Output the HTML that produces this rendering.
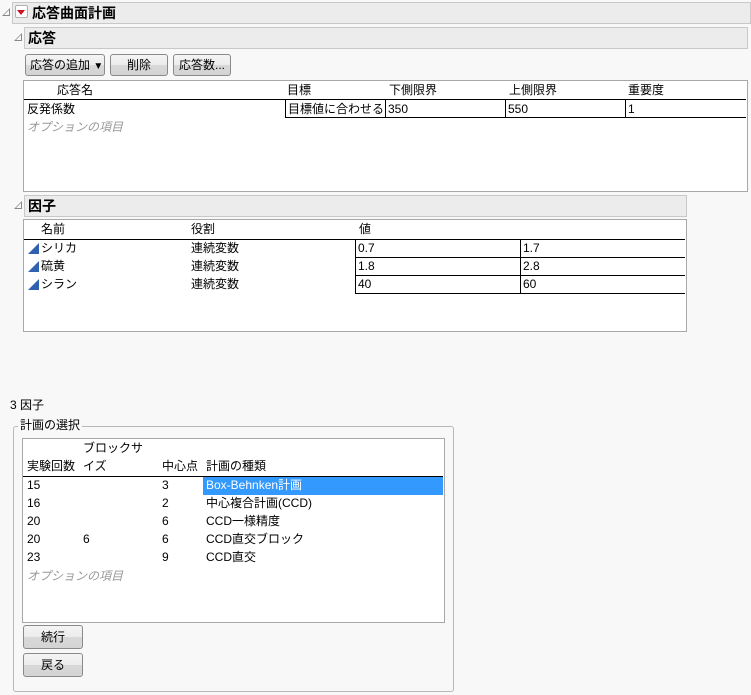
<!DOCTYPE html>
<html><head><meta charset="utf-8"><style>
*{box-sizing:border-box;margin:0;padding:0}
body{width:751px;height:695px;background:#f8f8f8;font-family:"Liberation Sans","Noto Sans CJK JP",sans-serif;font-size:12px;color:#000;position:relative;overflow:hidden}
.a{position:absolute;white-space:nowrap;line-height:14px}
.hdr{position:absolute;background:#ececec;border:1px solid #c8c8c8;font-weight:bold;font-size:14px;line-height:20px;padding-left:3px}
.tri{position:absolute;width:0;height:0;border-left:8px solid transparent;border-bottom:8px solid #888}
.tri:after{content:"";position:absolute;left:-6px;top:2px;width:0;height:0;border-left:5px solid transparent;border-bottom:5px solid #f8f8f8}
.btn{position:absolute;border:1px solid #8a8a8a;border-radius:3px;background:linear-gradient(#f4f4f4 0,#ececec 50%,#d8d8d8 51%,#d4d4d4 100%);text-align:center;line-height:20px;font-size:12px}
.box{position:absolute;background:#fff;border:1px solid #a8a8a8}
.hl{position:absolute;height:0;border-top:1px solid #000}
.vl{position:absolute;width:0;border-left:1px solid #000}
.it{color:#999;font-style:italic}
.bl{position:absolute;width:0;height:0;border-left:11px solid transparent;border-bottom:11px solid #3060b0}
</style></head><body>
<div class="tri" style="left:2px;top:8px"></div>
<div class="hdr" style="left:12px;top:2px;width:739px;height:22px;padding-left:19px">応答曲面計画</div>
<div style="position:absolute;left:15px;top:5px;width:13px;height:13px;border:1px solid #b0b0b0;border-radius:2px;background:#fff"></div>
<div style="position:absolute;left:17px;top:10px;border-left:4.5px solid transparent;border-right:4.5px solid transparent;border-top:5px solid #d01020"></div>

<div class="tri" style="left:14px;top:33px"></div>
<div class="hdr" style="left:24px;top:27px;width:724px;height:22px">応答</div>
<div class="btn" style="left:25px;top:54px;width:80px;height:22px;text-align:left;padding-left:4px">応答の追加 <span style="font-size:10px">▼</span></div>
<div class="btn" style="left:110px;top:54px;width:58px;height:22px">削除</div>
<div class="btn" style="left:173px;top:54px;width:58px;height:22px">応答数...</div>

<div class="box" style="left:23px;top:80px;width:725px;height:112px"></div>
<div class="a" style="left:57px;top:83px">応答名</div>
<div class="a" style="left:287px;top:83px">目標</div>
<div class="a" style="left:389px;top:83px">下側限界</div>
<div class="a" style="left:509px;top:83px">上側限界</div>
<div class="a" style="left:628px;top:83px">重要度</div>
<div class="hl" style="left:24px;top:99px;width:722px"></div>
<div class="hl" style="left:285px;top:117px;width:461px"></div>
<div class="vl" style="left:285px;top:99px;height:19px"></div>
<div class="vl" style="left:385px;top:99px;height:19px"></div>
<div class="vl" style="left:505px;top:99px;height:19px"></div>
<div class="vl" style="left:625px;top:99px;height:19px"></div>
<div class="a" style="left:27px;top:102px">反発係数</div>
<div class="a" style="left:288px;top:102px">目標値に合わせる</div>
<div class="a" style="left:388px;top:102px">350</div>
<div class="a" style="left:508px;top:102px">550</div>
<div class="a" style="left:628px;top:102px">1</div>
<div class="a it" style="left:27px;top:120px">オプションの項目</div>

<div class="tri" style="left:14px;top:201px"></div>
<div class="hdr" style="left:24px;top:195px;width:663px;height:22px">因子</div>
<div class="box" style="left:23px;top:219px;width:664px;height:113px"></div>
<div class="a" style="left:41px;top:222px">名前</div>
<div class="a" style="left:191px;top:222px">役割</div>
<div class="a" style="left:359px;top:222px">値</div>
<div class="hl" style="left:24px;top:239px;width:661px"></div>
<div class="hl" style="left:355px;top:257px;width:330px"></div>
<div class="hl" style="left:355px;top:275px;width:330px"></div>
<div class="hl" style="left:355px;top:293px;width:330px"></div>
<div class="vl" style="left:355px;top:239px;height:55px"></div>
<div class="vl" style="left:520px;top:239px;height:55px"></div>
<div class="bl" style="left:28px;top:243px"></div>
<div class="bl" style="left:28px;top:261px"></div>
<div class="bl" style="left:28px;top:279px"></div>
<div class="a" style="left:41px;top:241px">シリカ</div>
<div class="a" style="left:41px;top:259px">硫黄</div>
<div class="a" style="left:41px;top:277px">シラン</div>
<div class="a" style="left:191px;top:241px">連続変数</div>
<div class="a" style="left:191px;top:259px">連続変数</div>
<div class="a" style="left:191px;top:277px">連続変数</div>
<div class="a" style="left:358px;top:241px">0.7</div>
<div class="a" style="left:523px;top:241px">1.7</div>
<div class="a" style="left:358px;top:259px">1.8</div>
<div class="a" style="left:523px;top:259px">2.8</div>
<div class="a" style="left:358px;top:277px">40</div>
<div class="a" style="left:523px;top:277px">60</div>

<div class="a" style="left:10px;top:398px">3 因子</div>
<div style="position:absolute;left:13px;top:426px;width:441px;height:266px;border:1px solid #b8b8b8;border-radius:3px"></div>
<div class="a" style="left:18px;top:418px;background:#f8f8f8;padding:0 2px">計画の選択</div>
<div class="box" style="left:22px;top:438px;width:423px;height:185px"></div>
<div class="a" style="left:83px;top:441px">ブロックサ</div>
<div class="a" style="left:27px;top:459px">実験回数</div>
<div class="a" style="left:83px;top:459px">イズ</div>
<div class="a" style="left:162px;top:459px">中心点</div>
<div class="a" style="left:206px;top:459px">計画の種類</div>
<div class="hl" style="left:23px;top:476px;width:420px"></div>
<div style="position:absolute;left:203px;top:477px;width:240px;height:18px;background:#3399ff"></div>
<div class="a" style="left:27px;top:478px">15</div><div class="a" style="left:162px;top:478px">3</div><div class="a" style="left:206px;top:478px;color:#fff">Box-Behnken計画</div>
<div class="a" style="left:27px;top:496px">16</div><div class="a" style="left:162px;top:496px">2</div><div class="a" style="left:206px;top:496px">中心複合計画(CCD)</div>
<div class="a" style="left:27px;top:514px">20</div><div class="a" style="left:162px;top:514px">6</div><div class="a" style="left:206px;top:514px">CCD一様精度</div>
<div class="a" style="left:27px;top:532px">20</div><div class="a" style="left:83px;top:532px">6</div><div class="a" style="left:162px;top:532px">6</div><div class="a" style="left:206px;top:532px">CCD直交ブロック</div>
<div class="a" style="left:27px;top:550px">23</div><div class="a" style="left:162px;top:550px">9</div><div class="a" style="left:206px;top:550px">CCD直交</div>
<div class="a it" style="left:27px;top:569px">オプションの項目</div>
<div class="btn" style="left:23px;top:625px;width:60px;height:24px;line-height:22px">続行</div>
<div class="btn" style="left:23px;top:653px;width:60px;height:24px;line-height:22px">戻る</div>
</body></html>
